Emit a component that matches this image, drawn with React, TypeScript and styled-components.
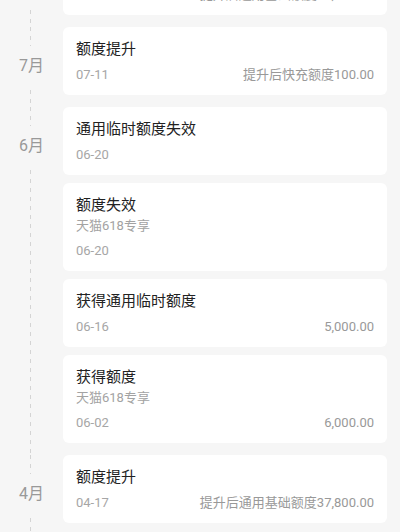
import styled, { createGlobalStyle } from "styled-components";

type Record = {
  title: string;
  note?: string;
  date: string;
  amount?: string;
};

type Group = {
  month: string;
  items: Record[];
};

const groups: Group[] = [
  {
    month: "8月",
    items: [{ title: "额度提升", date: "08-03", amount: "提升后通用基础额度38,800.00" }],
  },
  {
    month: "7月",
    items: [{ title: "额度提升", date: "07-11", amount: "提升后快充额度100.00" }],
  },
  {
    month: "6月",
    items: [
      { title: "通用临时额度失效", date: "06-20" },
      { title: "额度失效", note: "天猫618专享", date: "06-20" },
      { title: "获得通用临时额度", date: "06-16", amount: "5,000.00" },
      { title: "获得额度", note: "天猫618专享", date: "06-02", amount: "6,000.00" },
    ],
  },
  {
    month: "4月",
    items: [{ title: "额度提升", date: "04-17", amount: "提升后通用基础额度37,800.00" }],
  },
];

const GlobalStyle = createGlobalStyle`
  html, body {
    margin: 0;
    padding: 0;
    background: #f6f6f6;
    overflow: hidden;
  }
  body {
    font-family: Roboto, "Noto Sans CJK SC", sans-serif;
  }
`;

const Page = styled.div`
  width: 400px;
  height: 532px;
  overflow: hidden;
`;

const Timeline = styled.div`
  margin-top: -53px;
  display: flex;
  flex-direction: column;
`;

const MonthGroup = styled.section`
  display: grid;
  grid-template-columns: 63px 1fr;
  padding: 0 13px 12px 0;
  background: repeating-linear-gradient(
      to bottom,
      #d4d4d4 0 4px,
      transparent 4px 9px
    )
    30px 0 / 1px 100% no-repeat;
`;

const Rail = styled.div`
  display: flex;
  justify-content: center;
  align-items: flex-start;
`;

const MonthLabel = styled.div`
  margin-top: 19px;
  padding: 8px 0;
  width: 100%;
  text-align: center;
  background: #f6f6f6;
  font-size: 16px;
  line-height: 24px;
  color: #999;
`;

const CardList = styled.div`
  display: flex;
  flex-direction: column;
  gap: 8px;
`;

const Card = styled.div`
  background: #fff;
  border-radius: 6px;
  padding: 12px 13px 10px 13px;
  display: flex;
  flex-direction: column;
`;

const Title = styled.div`
  font-size: 15px;
  line-height: 20px;
  color: #222;
`;

const Note = styled.div`
  margin-top: 2px;
  font-size: 13px;
  line-height: 18px;
  color: #a3a3a3;
`;

const Meta = styled.div`
  margin-top: 6px;
  display: flex;
  justify-content: space-between;
  align-items: center;
  font-size: 13px;
  line-height: 20px;
  color: #a6a6a6;
`;

const Amount = styled.span`
  color: #999;
`;

export default function App() {
  return (
    <Page>
      <GlobalStyle />
      <Timeline>
        {groups.map((group) => (
          <MonthGroup key={group.month}>
            <Rail>
              <MonthLabel>{group.month}</MonthLabel>
            </Rail>
            <CardList>
              {group.items.map((item, index) => (
                <Card key={index}>
                  <Title>{item.title}</Title>
                  {item.note && <Note>{item.note}</Note>}
                  <Meta>
                    <span>{item.date}</span>
                    {item.amount && <Amount>{item.amount}</Amount>}
                  </Meta>
                </Card>
              ))}
            </CardList>
          </MonthGroup>
        ))}
      </Timeline>
    </Page>
  );
}
